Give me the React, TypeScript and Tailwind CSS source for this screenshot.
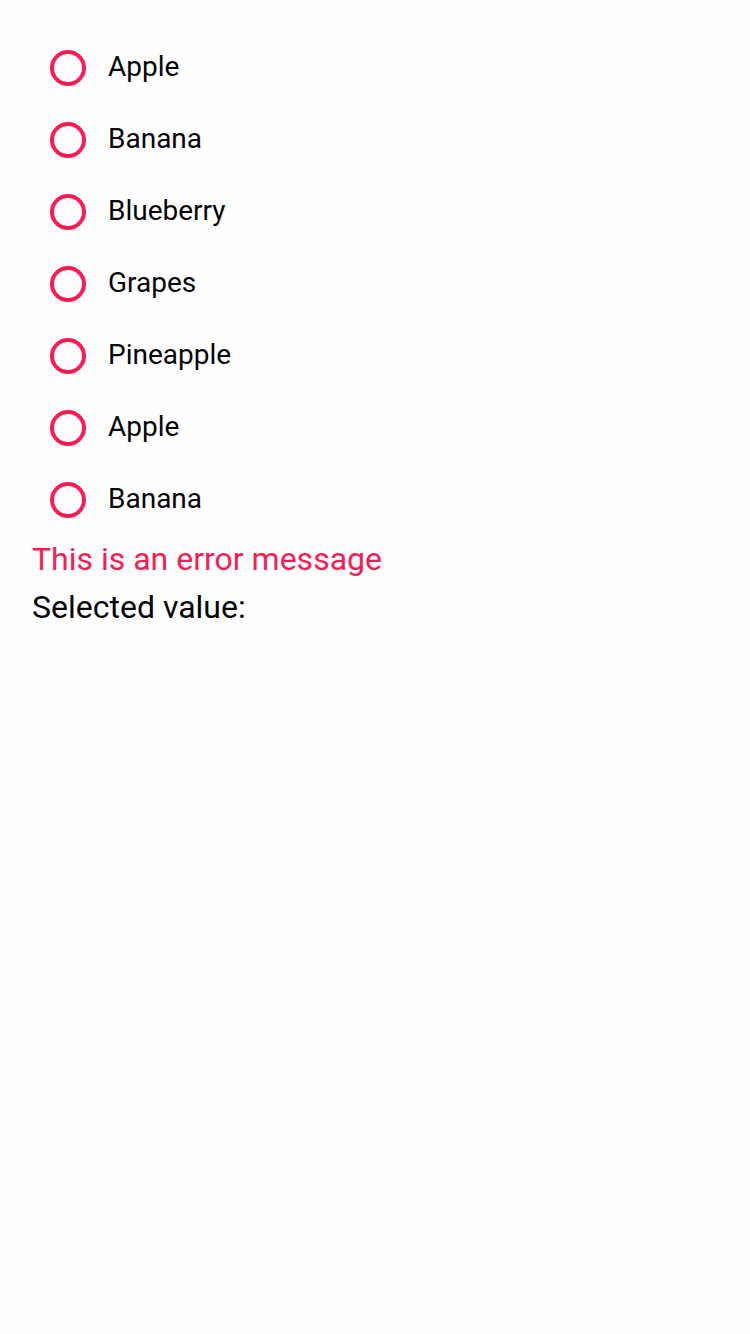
import { useState } from "react";

const fruits = ["Apple", "Banana", "Blueberry", "Grapes", "Pineapple", "Apple", "Banana"];

export default function App() {
  const [selected, setSelected] = useState<number | null>(null);

  return (
    <main className="min-h-screen bg-[#fefefe] p-8 font-[Roboto,sans-serif] text-[32px] text-[#050507]">
      <fieldset>
        {fruits.map((fruit, index) => (
          <label key={index} className="flex h-[72px] items-center gap-[22px] pl-[18px] text-[28px]">
            <input
              type="radio"
              name="fruit"
              value={fruit}
              checked={selected === index}
              onChange={() => setSelected(index)}
              className="size-9 shrink-0 appearance-none rounded-full border-4 border-[#fa1b54] checked:bg-[#fa1b54] checked:bg-clip-content checked:p-1"
            />
            <span className="pb-0.5">{fruit}</span>
          </label>
        ))}
      </fieldset>
      <div className="flex flex-col gap-0.5 leading-[46px]">
        <p className="text-[#fa1b54]" role="alert">This is an error message</p>
        <p>Selected value: {selected === null ? "" : fruits[selected]}</p>
      </div>
    </main>
  );
}
